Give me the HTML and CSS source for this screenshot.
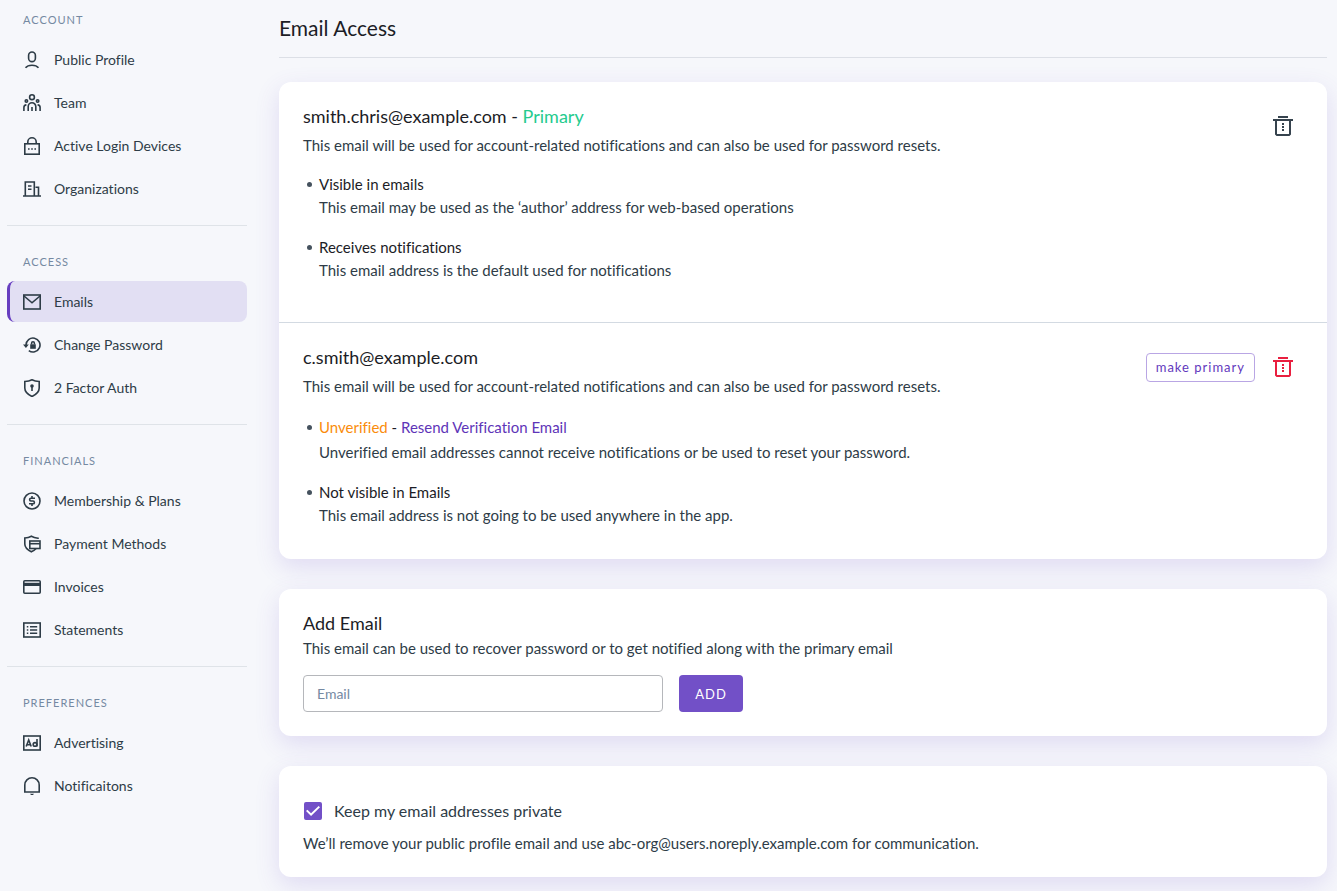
FILE: index.html
```html
<!DOCTYPE html>
<html lang="en">
<head>
<meta charset="utf-8">
<title>Email Access</title>
<meta name="viewport" content="width=device-width, initial-scale=1">
<link rel="stylesheet" href="styles.css">
</head>
<body>
<div class="layout">
  <nav class="sidebar" aria-label="Settings">
    <section class="group">
      <h2 class="group-title">ACCOUNT</h2>
      <a class="item" href="#profile"><svg class="icon" viewBox="0 0 18 18"><rect x="5.600" y="1" width="6.800" height="9.600" rx="3.400"/><path d="M2.500 16.800c1.300-1.700 3.800-2.600 6.500-2.600s5.200.9 6.500 2.600"/></svg>Public Profile</a>
      <a class="item" href="#team"><svg class="icon" viewBox="0 0 18 18"><circle cx="9" cy="3.200" r="2.400"/><circle cx="3.400" cy="7" r="1.200"/><circle cx="14.600" cy="7" r="1.200"/><path d="M5.200 17v-4.500a3.800 3.800 0 0 1 7.600 0V17M9 17v-4M.9 17v-3.600c0-1.500.9-2.400 2.500-2.500M17.100 17v-3.600c0-1.500-.9-2.400-2.500-2.500"/></svg>Team</a>
      <a class="item" href="#devices"><svg class="icon" viewBox="0 0 18 18"><rect x="1.800" y="6.800" width="14.400" height="10.400"/><path d="M4.800 6.800V5a4.200 4.200 0 0 1 8.400 0v1.800"/><path d="M5 12h1.600M8.200 12h1.600M11.400 12H13"/></svg>Active Login Devices</a>
      <a class="item" href="#organizations"><svg class="icon" viewBox="0 0 18 18"><path d="M0 16h18M2.300 16V2h9v14M12.500 7.200h3V16M5 6h3.500M5 9.300h3.500"/></svg>Organizations</a>
    </section>
    <section class="group">
      <h2 class="group-title">ACCESS</h2>
      <a class="item item-active" href="#emails" aria-current="page"><svg class="icon" viewBox="0 0 18 18"><rect x=".8" y="2" width="16.400" height="14"/><path d="m1 3 8 6.800L17 3"/></svg>Emails</a>
      <a class="item" href="#password"><svg class="icon" viewBox="0 0 18 18"><path d="M3 9a7 7 0 1 1 2.800 5.600"/><path class="solid" d="M0 8.500h5.800L2.900 12z"/><path class="solid" d="M7.200 8.300h5.600v4.500H7.200z"/><path d="M8.600 8.500V7.200a1.400 1.400 0 0 1 2.800 0v1.300"/></svg>Change Password</a>
      <a class="item" href="#two-factor"><svg class="icon" viewBox="0 0 18 18"><path d="M9 .8c2.500 1.300 4.700 1.600 7.200 1.700V9c0 4.200-3 6.500-7.200 8.500C4.800 15.500 1.800 13.200 1.800 9V2.500C4.300 2.400 6.500 2.100 9 .8z"/><circle class="solid" cx="9" cy="7" r="1.800"/><path d="M9 7v5"/></svg>2 Factor Auth</a>
    </section>
    <section class="group">
      <h2 class="group-title">FINANCIALS</h2>
      <a class="item" href="#membership"><svg class="icon" viewBox="0 0 18 18"><circle cx="9" cy="9" r="8"/><path d="M12 6.200H8a1.400 1.400 0 0 0 0 2.800h2a1.400 1.400 0 0 1 0 2.800H6M9 4v2M9 12v2"/></svg>Membership &amp; Plans</a>
      <a class="item" href="#payment"><svg class="icon" viewBox="0 0 18 18"><path d="M15 4V3.200C12.500 2.800 10.300 2.200 8.400 1.200 6.400 2.300 4.300 2.900 1.800 3v6c0 4 3 6 6.500 7.800 2-.9 3.600-2 4.800-3.300"/><rect x="6.800" y="6" width="10.200" height="7.500"/><path d="M7 8.700h10"/></svg>Payment Methods</a>
      <a class="item" href="#invoices"><svg class="icon" viewBox="0 0 18 18"><rect x=".8" y="2.800" width="16.400" height="12.400" rx="1"/><path class="solid" d="M1 4.800h16v3.200H1z"/></svg>Invoices</a>
      <a class="item" href="#statements"><svg class="icon" viewBox="0 0 18 18"><rect x=".8" y="2" width="16.400" height="14"/><path d="M3.800 5.700h1.500M3.800 9h1.500M3.800 12.300h1.500M7 5.700h7.200M7 9h7.200M7 12.300h7.200"/></svg>Statements</a>
    </section>
    <section class="group">
      <h2 class="group-title">PREFERENCES</h2>
      <a class="item" href="#advertising"><svg class="icon" viewBox="0 0 18 18"><rect x=".8" y="2" width="16.400" height="14"/><path d="M3.200 12.500 5.700 6l2.500 6.500M4 10.700h3.400M14 5v7.500"/><circle cx="12" cy="10.400" r="1.800"/></svg>Advertising</a>
      <a class="item" href="#notifications"><svg class="icon" viewBox="0 0 18 18"><path d="M1.800 15V8a7.200 7.200 0 0 1 14.400 0v7z"/><path class="solid" d="M7 16.800h4l-1 1.200H8z"/></svg>Notificaitons</a>
    </section>
  </nav>

  <main class="content">
    <h1 class="page-title">Email Access</h1>

    <div class="card">
      <section class="address">
        <div class="address-body">
          <h2 class="heading">smith.chris@example.com - <span class="primary">Primary</span></h2>
          <p class="intro">This email will be used for account-related notifications and can also be used for password resets.</p>
          <ul class="facts">
            <li><h3 class="fact">Visible in emails</h3><p>This email may be used as the ‘author’ address for web-based operations</p></li>
            <li><h3 class="fact">Receives notifications</h3><p>This email address is the default used for notifications</p></li>
          </ul>
        </div>
        <div class="actions">
          <button class="trash" type="button" aria-label="Delete smith.chris@example.com"><svg class="trash-icon" viewBox="0 0 20 20"><path d="M5 1h10M0 4h20M3 4v14l1 1h12l1-1V4M10 7v2M10 10v2M10 13v2"/></svg></button>
        </div>
      </section>
      <section class="address address-secondary">
        <div class="address-body">
          <h2 class="heading">c.smith@example.com</h2>
          <p class="intro">This email will be used for account-related notifications and can also be used for password resets.</p>
          <ul class="facts">
            <li class="status"><h3 class="fact">
              <span class="warning">Unverified</span> - <a class="resend" href="#resend">Resend Verification Email</a></h3><p>Unverified email addresses cannot receive notifications or be used to reset your password.</p></li>
            <li><h3 class="fact">Not visible in Emails</h3><p>This email address is not going to be used anywhere in the app.</p></li>
          </ul>
        </div>
        <div class="actions">
          <button class="make-primary" type="button">make primary</button>
          <button class="trash trash-danger" type="button" aria-label="Delete c.smith@example.com"><svg class="trash-icon" viewBox="0 0 20 20"><path d="M5 1h10M0 4h20M3 4v14l1 1h12l1-1V4M10 7v2M10 10v2M10 13v2"/></svg></button>
        </div>
      </section>
    </div>

    <form class="card add-card">
      <h2 class="heading"><label for="new-email">Add Email</label></h2>
      <p class="add-text">This email can be used to recover password or to get notified along with the primary email</p>
      <div class="add-row">
        <input class="email-input" id="new-email" type="email" placeholder="Email">
        <button class="add-button" type="submit">ADD</button>
      </div>
    </form>

    <section class="card private-card">
      <label class="private-label"><input class="checkbox" type="checkbox" checked>Keep my email addresses private</label>
      <p>We’ll remove your public profile email and use abc-org@users.noreply.example.com for communication.</p>
    </section>
  </main>
</div>
</body>
</html>
```
FILE: styles.css
```css
* { box-sizing: border-box; }

body {
  margin: 0;
  background: #f6f7fb;
  color: #2e3c47;
  font: 15px/20px Lato, "Open Sans", sans-serif;
  font-variant-ligatures: none;
}

h1, h2, h3, p, ul { margin: 0; padding: 0; font-weight: 400; }
button, input { font: inherit; }
button { cursor: pointer; }
a { text-decoration: none; }

.layout {
  display: grid;
  grid-template-columns: 240px minmax(0, 1fr);
  gap: 32px;
  padding: 0 10px 14px 7px;
}

/* Sidebar */
.sidebar { padding-top: 11px; }
.group { display: flex; flex-direction: column; gap: 2px; }
.group + .group {
  margin-top: 16px;
  padding-top: 28px;
  border-top: 1px solid #dfe3e8;
}
.group-title {
  margin-bottom: 9px;
  padding-left: 16px;
  color: #7589a2;
  font-size: 11px;
  line-height: 17px;
  letter-spacing: 1px;
}
.group + .group .group-title { line-height: 16px; }
.item {
  display: flex;
  align-items: center;
  gap: 13px;
  height: 41px;
  padding: 0 16px 0 13px;
  border-left: 3px solid transparent;
  border-radius: 8px;
  color: #2e3c47;
  font-size: 14px;
}
.item-active { border-left-color: #673ec0; background: #e2dff3; }
.icon {
  flex: none;
  width: 18px;
  height: 18px;
  fill: none;
  stroke: currentColor;
  stroke-width: 1.6;
}
.icon .solid { fill: currentColor; stroke: none; }

/* Content */
.page-title {
  margin-bottom: 24px;
  padding: 14px 0 15px;
  border-bottom: 1px solid #dcdfe6;
  color: #1c1d26;
  font-size: 21px;
  line-height: 28px;
}
.card {
  border-radius: 12px;
  background: #fff;
  box-shadow: 0 8px 24px rgba(103, 72, 200, 0.16);
}
.card + .card { margin-top: 30px; }
.heading { color: #1c1d26; font-size: 18px; line-height: 20px; }

.address {
  display: flex;
  justify-content: space-between;
  gap: 16px;
  padding: 24px 24px 42px;
}
.address-secondary { padding-bottom: 34px; border-top: 1px solid #d3dae2; }
.intro { margin: 9px 0 19px; }
.facts {
  display: flex;
  flex-direction: column;
  gap: 20px;
  padding-left: 16px;
  list-style: none;
}
.facts li { position: relative; }
.facts li::before {
  position: absolute;
  top: 8px;
  left: -12px;
  width: 5px;
  height: 5px;
  border-radius: 50%;
  background: #45525e;
  content: "";
}
.fact { margin-bottom: 3px; color: #1c1d26; font-size: 15px; line-height: 20px; }
.status .fact { line-height: 24px; }
.facts .status::before { top: 10px; }
.primary { color: #25cb8e; }
.warning { color: #fa8c0c; }
.resend { color: #5e35b8; }

.actions { display: flex; flex: none; align-items: center; align-self: flex-start; gap: 8px; }
.make-primary {
  height: 29px;
  padding: 0 9px;
  border: 1px solid #b9a6e4;
  border-radius: 4px;
  background: #fff;
  color: #6239bd;
  font-size: 13px;
  letter-spacing: 1px;
}
.trash { padding: 10px; border: 0; background: none; color: #36434e; }
.trash-danger { color: #e91f3f; }
.trash-icon {
  display: block;
  width: 20px;
  height: 20px;
  fill: none;
  stroke: currentColor;
  stroke-width: 2;
}

.add-card { padding: 24px; }
.add-text { margin: 5px 0 17px; }
.add-row { display: flex; gap: 16px; }
.email-input {
  width: 360px;
  height: 37px;
  padding: 0 13px;
  border: 1px solid #b5b7bb;
  border-radius: 4px;
  background: #fff;
  color: #2e3c47;
  font-size: 14px;
}
.email-input::placeholder { color: #7589a2; }
.add-button {
  width: 64px;
  height: 37px;
  padding: 0;
  border: 0;
  border-radius: 4px;
  background: #7250c7;
  color: #fff;
  font-size: 13px;
  letter-spacing: 1px;
}

.private-card { padding: 24px; }
.private-label {
  display: flex;
  align-items: center;
  gap: 12px;
  height: 42px;
  margin-bottom: 1px;
  font-size: 16px;
}
.checkbox {
  display: grid;
  flex: none;
  place-items: center;
  width: 18px;
  height: 18px;
  margin: 0 0 0 1px;
  border: 2px solid #7250c7;
  border-radius: 2px;
  appearance: none;
}
.checkbox:checked { background: #7250c7; }
.checkbox:checked::before {
  width: 14px;
  height: 10px;
  background: #fff;
  clip-path: polygon(0 50%, 10% 38%, 36% 72%, 90% 0, 100% 12%, 36% 100%);
  content: "";
}
```
